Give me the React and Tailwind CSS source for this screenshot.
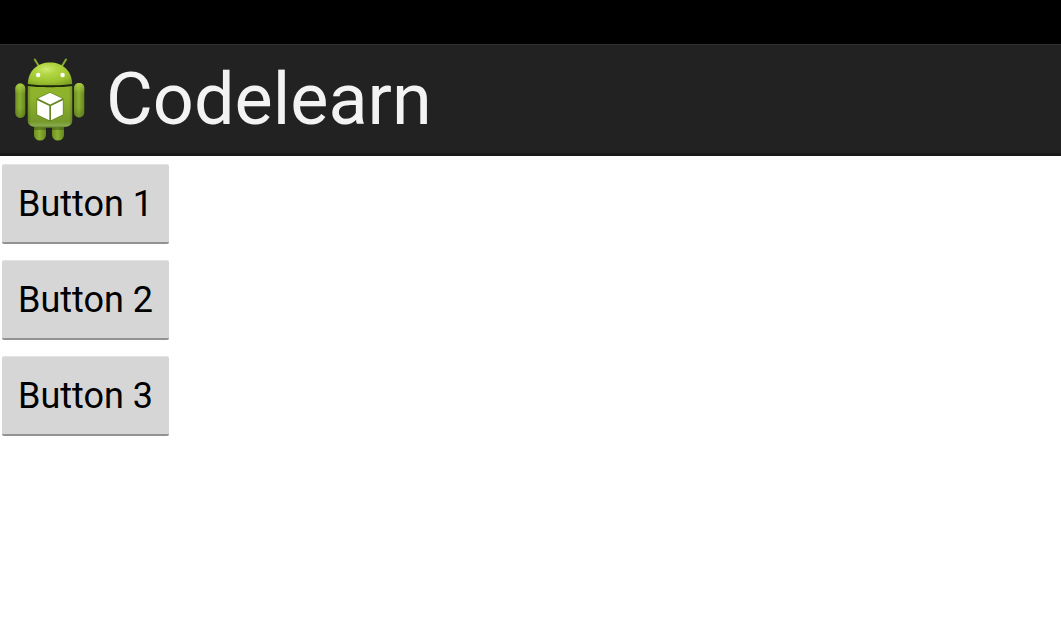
const labels = ["Button 1", "Button 2", "Button 3"];

function AndroidIcon() {
  return (
    <svg className="h-[88px] w-[76px] shrink-0" viewBox="12 12 76 88" aria-hidden="true">
      <defs>
        <radialGradient id="head" cx="0.42" cy="0.3" r="0.8">
          <stop offset="0" stopColor="#cdea72" />
          <stop offset="0.3" stopColor="#b0d540" />
          <stop offset="0.7" stopColor="#9cc230" />
          <stop offset="1" stopColor="#7a9f22" />
        </radialGradient>
        <linearGradient id="body" x1="0" y1="0" x2="0" y2="1">
          <stop offset="0" stopColor="#8fb32a" />
          <stop offset="0.3" stopColor="#8eb22c" />
          <stop offset="0.85" stopColor="#76992b" />
          <stop offset="0.95" stopColor="#87a94c" />
          <stop offset="1" stopColor="#5d7c24" />
        </linearGradient>
        <linearGradient id="edge" x1="0" y1="0" x2="1" y2="0">
          <stop offset="0" stopColor="#3c5412" stopOpacity="0.3" />
          <stop offset="0.08" stopColor="#3c5412" stopOpacity="0" />
          <stop offset="0.92" stopColor="#3c5412" stopOpacity="0" />
          <stop offset="1" stopColor="#3c5412" stopOpacity="0.3" />
        </linearGradient>
        <linearGradient id="limb" x1="0" y1="0" x2="1" y2="0">
          <stop offset="0" stopColor="#6d9020" />
          <stop offset="0.45" stopColor="#8cb033" />
          <stop offset="1" stopColor="#66871c" />
        </linearGradient>
        <linearGradient id="shade" x1="0" y1="0" x2="0" y2="1">
          <stop offset="0" stopColor="#b6d94a" stopOpacity="0.75" />
          <stop offset="0.3" stopColor="#b6d94a" stopOpacity="0" />
          <stop offset="0.7" stopColor="#304611" stopOpacity="0" />
          <stop offset="1" stopColor="#304611" stopOpacity="0.3" />
        </linearGradient>
      </defs>
      <path d="M34.8 15.5 38.8 22M66 15.5 62 22" stroke="#88ab2d" strokeWidth="2" strokeLinecap="round" />
      <g fill="url(#limb)">
        <path d="M34 80h12v11a6 5.5 0 0 1-12 0z" />
        <path d="M52 80h12v11a6 5.500 0 0 1-12 0z" />
        <rect x="15.300" y="39.500" width="10" height="34.500" rx="5" />
        <rect x="74" y="39" width="10.300" height="34.500" rx="5" />
      </g>
      <g fill="url(#shade)">
        <rect x="15.300" y="39.500" width="10" height="34.500" rx="5" />
        <rect x="74" y="39" width="10.300" height="34.500" rx="5" />
      </g>
      <path d="M34 83h12v3H34zM52 83h12v3H52z" fill="#2f430f" opacity="0.4" />
      <path d="M27.800 39c10 3 34.400 3 44.400 0v5H27.800z" fill="#1b240c" />
      <path d="M27.800 40C28.200 26.500 37.600 18.400 50 18.400S71.800 26.500 72.200 40C64 41.800 36 41.800 27.800 40z" fill="url(#head)" />
      <g>
        <path id="torso" d="M27.800 42c10 1.600 34.400 1.600 44.400 0v34.200c0 4.400-2.800 6.200-6.500 6.700-9 1.100-22.400 1.100-31.400 0-3.700-.5-6.500-2.300-6.500-6.700z" fill="url(#body)" />
        <path d="M27.800 42c10 1.600 34.400 1.600 44.400 0v34.200c0 4.400-2.800 6.200-6.500 6.700-9 1.100-22.400 1.100-31.400 0-3.700-.5-6.500-2.300-6.500-6.700z" fill="url(#edge)" />
      </g>
      <circle cx="38.200" cy="31" r="2.200" fill="#fff" />
      <circle cx="62.600" cy="31" r="2.200" fill="#fff" />
      <path d="M50 48 63.500 54.500v16.500L50 77.500 36.500 71V54.500z" fill="#668722" />
      <g fill="#fff">
        <path d="M50 48.700 62.200 54.400 50.200 60.400 38 54.600z" />
        <path d="M37.200 56.200 49.300 62v14.300L37.200 70.600z" />
        <path d="M62.800 56.200 51 62v14.300l11.800-5.700z" />
      </g>
    </svg>
  );
}

export default function App() {
  return (
    <div className="min-h-screen bg-white font-[Roboto,sans-serif]">
      <div className="h-11 bg-black" />
      <header className="flex h-28 items-center gap-[18px] border-t border-b-3 border-t-[#303030] border-b-[#191919] bg-[#222222] px-3 pt-0.5">
        <AndroidIcon />
        <h1 className="text-[72px] leading-[84px] text-[#f3f3f3]">Codelearn</h1>
      </header>
      <main className="flex flex-col items-start gap-4 px-0.5 py-2">
        {labels.map((label) => (
          <button
            key={label}
            type="button"
            className="h-20 rounded-xs border-t border-b-2 border-t-[#e2e2e2] border-b-[#929292] bg-[#d6d6d6] px-4 text-4xl text-black"
          >
            {label}
          </button>
        ))}
      </main>
    </div>
  );
}
